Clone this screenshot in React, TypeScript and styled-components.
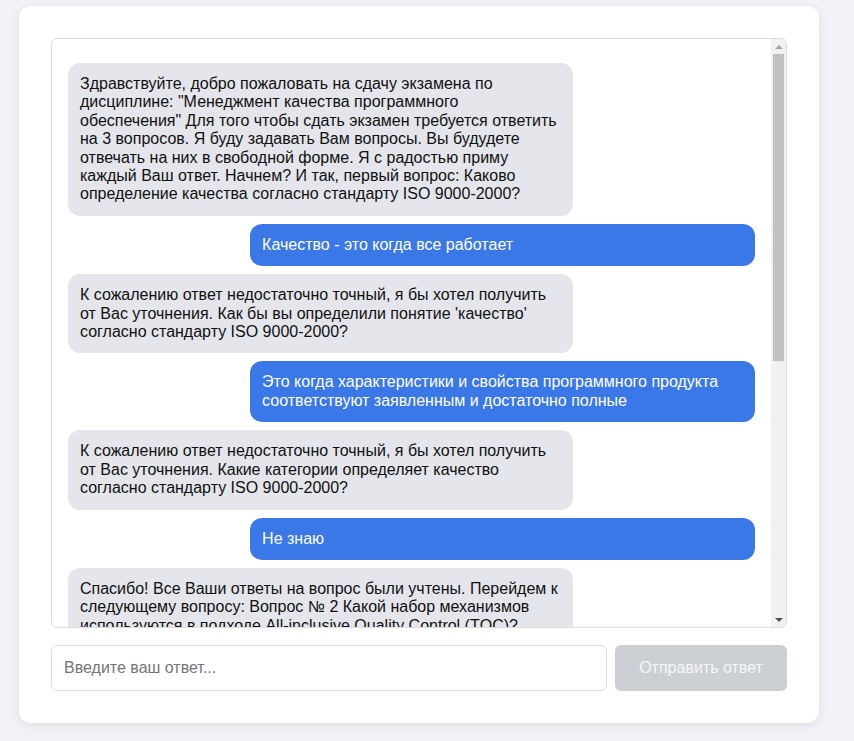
import React from "react";
import styled, { createGlobalStyle } from "styled-components";

const GlobalStyle = createGlobalStyle`
  html, body {
    margin: 0;
    padding: 0;
    background: #f0f2f5;
    font-family: "Liberation Sans", Arial, sans-serif;
  }
  * { box-sizing: border-box; }
`;

const Page = styled.div`
  min-height: 741px;
  padding: 6px 0 0 19px;
`;

const Card = styled.div`
  width: 800px;
  background: #ffffff;
  border-radius: 12px;
  box-shadow: 0 2px 10px rgba(0, 0, 0, 0.08);
  padding: 32px;
  display: flex;
  flex-direction: column;
  gap: 17px;
`;

const ChatBox = styled.div`
  height: 590px;
  border: 1px solid #dddddd;
  border-radius: 6px;
  display: flex;
  overflow: hidden;
`;

const Viewport = styled.div`
  flex: 1;
  min-width: 0;
  padding: 16px;
  overflow: hidden;
`;

const ScrollBar = styled.div`
  width: 15px;
  flex: none;
  display: flex;
  flex-direction: column;
  background: #f1f1f1;
`;

const ArrowButton = styled.div<{ $down?: boolean; $active?: boolean }>`
  height: 15px;
  flex: none;
  display: flex;
  align-items: center;
  justify-content: center;
  &::before {
    content: "";
    width: 0;
    height: 0;
    border-left: 4px solid transparent;
    border-right: 4px solid transparent;
    ${(p) =>
      p.$down
        ? `border-top: 4px solid ${p.$active ? "#505050" : "#a3a3a3"};`
        : `border-bottom: 4px solid ${p.$active ? "#505050" : "#a3a3a3"};`}
  }
`;

const Track = styled.div`
  flex: 1;
  padding: 0 2px;
`;

const Thumb = styled.div`
  height: 307px;
  background: #c1c1c1;
`;

const MessageList = styled.div`
  display: flex;
  flex-direction: column;
  gap: 8px;
  padding: 8px 0;
`;

const Bubble = styled.div<{ $mine?: boolean }>`
  box-sizing: content-box;
  width: 70%;
  padding: 12px;
  border-radius: 12px;
  font-size: 16px;
  line-height: 18.4px;
  align-self: ${(p) => (p.$mine ? "flex-end" : "flex-start")};
  background: ${(p) => (p.$mine ? "#3b78e7" : "#e4e6eb")};
  color: ${(p) => (p.$mine ? "#ffffff" : "#111111")};
`;

const InputRow = styled.div`
  display: flex;
  gap: 8px;
  height: 46px;
`;

const AnswerInput = styled.input`
  flex: 1;
  height: 46px;
  border: 1px solid #dddddd;
  border-radius: 6px;
  padding: 0 12px;
  font-size: 16px;
  font-family: "Liberation Sans", Arial, sans-serif;
  color: #111;
  outline: none;
  &::placeholder { color: #757575; }
`;

const SendButton = styled.button`
  width: 172px;
  height: 46px;
  border: none;
  border-radius: 6px;
  background: #ccd0d5;
  color: #f5f6f7;
  font-size: 16px;
  font-family: "Liberation Sans", Arial, sans-serif;
  cursor: not-allowed;
`;

type Msg = { mine?: boolean; text: string };

const messages: Msg[] = [
  {
    text:
      'Здравствуйте, добро пожаловать на сдачу экзамена по дисциплине: "Менеджмент качества программного обеспечения" Для того чтобы сдать экзамен требуется ответить на 3 вопросов. Я буду задавать Вам вопросы. Вы будудете отвечать на них в свободной форме. Я с радостью приму каждый Ваш ответ. Начнем? И так, первый вопрос: Каково определение качества согласно стандарту ISO 9000-2000?',
  },
  { mine: true, text: "Качество - это когда все работает" },
  {
    text:
      "К сожалению ответ недостаточно точный, я бы хотел получить от Вас уточнения. Как бы вы определили понятие 'качество' согласно стандарту ISO 9000-2000?",
  },
  {
    mine: true,
    text:
      "Это когда характеристики и свойства программного продукта соответствуют заявленным и достаточно полные",
  },
  {
    text:
      "К сожалению ответ недостаточно точный, я бы хотел получить от Вас уточнения. Какие категории определяет качество согласно стандарту ISO 9000-2000?",
  },
  { mine: true, text: "Не знаю" },
  {
    text:
      "Спасибо! Все Ваши ответы на вопрос были учтены. Перейдем к следующему вопросу: Вопрос № 2 Какой набор механизмов используются в подходе All-inclusive Quality Control (TQC)?",
  },
  { mine: true, text: "Контроль качества на всех этапах производства" },
  {
    text:
      "К сожалению ответ недостаточно точный, я бы хотел получить от Вас уточнения. Какие именно механизмы включает подход All-inclusive Quality Control (TQC)?",
  },
];

export default function App() {
  return (
    <>
      <GlobalStyle />
      <Page>
        <Card>
          <ChatBox>
            <Viewport>
              <MessageList>
                {messages.map((m, i) => (
                  <Bubble key={i} $mine={m.mine}>
                    {m.text}
                  </Bubble>
                ))}
              </MessageList>
            </Viewport>
            <ScrollBar>
              <ArrowButton />
              <Track>
                <Thumb />
              </Track>
              <ArrowButton $down $active />
            </ScrollBar>
          </ChatBox>
          <InputRow>
            <AnswerInput placeholder="Введите ваш ответ..." />
            <SendButton disabled>Отправить ответ</SendButton>
          </InputRow>
        </Card>
      </Page>
    </>
  );
}
